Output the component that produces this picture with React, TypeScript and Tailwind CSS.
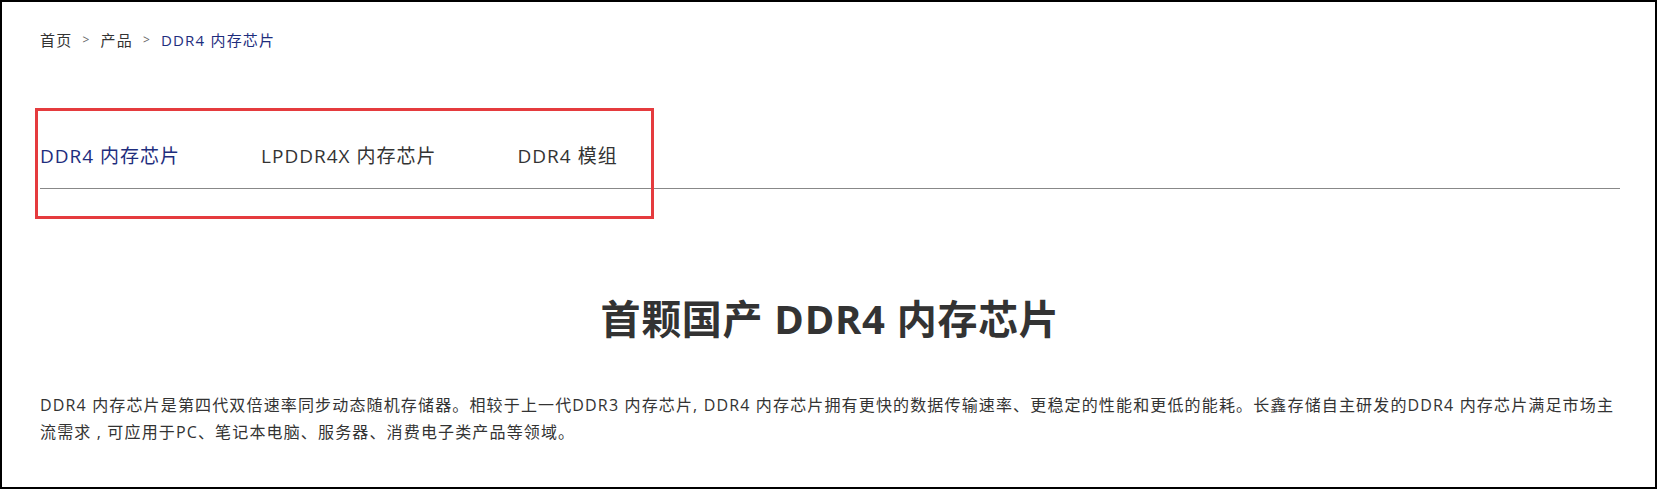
import React from 'react';

const tabs = [
  { label: 'DDR4 内存芯片', active: true },
  { label: 'LPDDR4X 内存芯片', active: false },
  { label: 'DDR4 模组', active: false },
];

export default function App() {
  return (
    <div
      className="relative h-[489px] w-full overflow-hidden border-2 border-black bg-white pl-[38px] pr-[35px] text-[#333]"
      style={{ fontFamily: '"Open Sans", "Noto Sans CJK SC", sans-serif' }}
    >
      {/* breadcrumb */}
      <div className="flex items-center pt-[27px] text-[15px] leading-[22px] tracking-[1.2px]">
        <span>首页</span>
        <span className="mx-[10px] text-[12px] text-[#666]">&gt;</span>
        <span>产品</span>
        <span className="mx-[10px] text-[12px] text-[#666]">&gt;</span>
        <span className="text-[#1e2d7d]">DDR4 内存芯片</span>
      </div>

      {/* tabs */}
      <div className="mt-[92px] flex gap-[81px] border-b border-[#888] pb-[18px] text-[19px] leading-[27px] tracking-[1px]">
        {tabs.map((t) => (
          <span key={t.label} className={t.active ? 'text-[#1e2d7d]' : 'text-[#333]'}>
            {t.label}
          </span>
        ))}
      </div>

      <h1 className="mt-[100px] text-center text-[40px] font-bold leading-[60px] tracking-[0.7px] text-[#333]">
        首颗国产 DDR4 内存芯片
      </h1>

      <p className="mt-[43px] text-[16px] leading-[27px] tracking-[1.15px] text-[#333]">
        DDR4 内存芯片是第四代双倍速率同步动态随机存储器。相较于上一代DDR3 内存芯片, DDR4 内存芯片拥有更快的数据传输速率、更稳定的性能和更低的能耗。长鑫存储自主研发的DDR4 内存芯片满足市场主流需求 , 可应用于PC、笔记本电脑、服务器、消费电子类产品等领域。
      </p>

      {/* annotation box */}
      <div className="pointer-events-none absolute left-[33px] top-[106px] h-[111px] w-[619px] border-[3px] border-[#e53b3e]" />
    </div>
  );
}
